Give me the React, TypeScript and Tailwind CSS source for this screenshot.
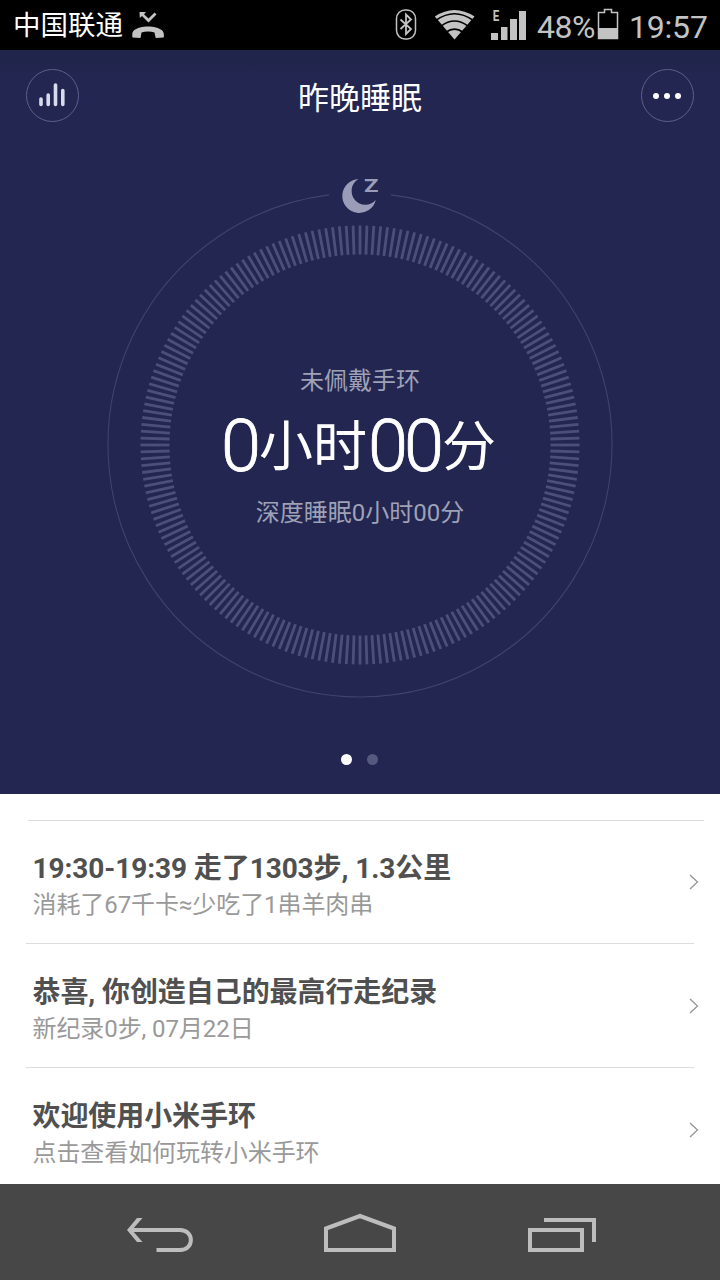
type Activity = {
    title: string
    detail: string
}

const activities: Activity[] = [
    { title: "19:30-19:39 走了1303步, 1.3公里", detail: "消耗了67千卡≈少吃了1串羊肉串" },
    { title: "恭喜, 你创造自己的最高行走纪录", detail: "新纪录0步, 07月22日" },
    { title: "欢迎使用小米手环", detail: "点击查看如何玩转小米手环" },
]

const TICKS = 200

function StatusBar() {
    return <header className="flex h-[50px] shrink-0 items-center bg-black pl-[13px] pr-3 text-[#c3c3c3]">
        <span className="pt-0.5 text-[27.5px] leading-[50px] text-white">中国联通</span>
        <svg className="ml-[9px]" width="32" height="50" viewBox="132 0 32 50" fill="currentColor">
            <path d="M139.500 12h6.500l-2 2.200 4.500 4.300 6-6 2 2-8 8-6.500-6.500-2.200 2z" />
            <path d="M132.500 37.500c-.5-3-.3-5.500 1.500-7.200 6-5.200 22-5.200 28 0 1.800 1.700 2.300 4.200 1.700 7.200l-8 .5-1.200-5.500c-4-1.500-9-1.500-13 0l-1 5.500z" />
        </svg>
        <svg className="ml-auto" width="22" height="50" viewBox="395 0 22 50" fill="none" stroke="currentColor">
            <rect x="396.500" y="10" width="19" height="29" rx="8.500" strokeWidth="1.500" />
            <path d="M400.500 19.500l10.500 9.500-5 5V14.500l5 5-10.500 9.500" strokeWidth="1.800" />
        </svg>
        <svg className="ml-[17px]" width="42" height="50" viewBox="434 0 42 50">
            <path d="M454.500 39.500L434.800 16.500Q454.500 3.500 474.500 16.500Z" fill="currentColor" />
            <path d="M436 20.300Q454.500 7.200 473 20.300M441 26.200Q454.500 15.800 468 26.200M446 32.300Q454.500 25.800 463 32.300" fill="none" stroke="#000" strokeWidth="1.700" />
        </svg>
        <svg className="ml-[14px]" width="38" height="50" viewBox="490 0 38 50" fill="currentColor">
            <text x="492.700" y="20.800" fontSize="15" fontWeight="700" textLength="6.500" lengthAdjust="spacingAndGlyphs">E</text>
            <path d="M491 33h7v7h-7zM501 27h6.500v13H501zM510 19h7v21h-7zM519 11h7v29h-7z" />
        </svg>
        <span className="ml-[9px] w-[59px] whitespace-nowrap pt-[3px] text-[32px] leading-[50px] tracking-[-0.5px]">48%</span>
        <svg className="ml-px" width="22" height="50" viewBox="597 0 22 50" fill="none" stroke="currentColor">
            <path d="M598.500 38.500V12.500h6v-3h7v3h6v26z" strokeWidth="1.500" />
            <path d="M598 28h20v11h-20z" fill="currentColor" stroke="none" />
        </svg>
        <span className="ml-2.5 w-[79px] whitespace-nowrap pt-[3px] text-[32px] leading-[50px] tracking-[-0.2px]">19:57</span>
    </header>
}

function TopBar() {
    return <div className="flex h-[72px] items-start justify-between px-[26px] pt-[19px]">
        <button className="flex size-[53px] items-center justify-center rounded-full border border-[#5d6189] pb-0.5 pr-0.5">
            <svg width="28" height="26" viewBox="0 0 28 26" stroke="#d9dbec" strokeWidth="3.600" strokeLinecap="round">
                <path d="M3 17v5.500M10.200 13v9.500M17.500 3v19.500M24.800 8.500v14" />
            </svg>
        </button>
        <h1 className="pt-[3px] text-[31px] leading-[53px] text-white">昨晚睡眠</h1>
        <button className="flex size-[53px] items-center justify-center gap-[5px] rounded-full border border-[#5d6189] pr-px">
            <i className="size-[6px] rounded-full bg-white" />
            <i className="size-[6px] rounded-full bg-white" />
            <i className="size-[6px] rounded-full bg-white" />
        </button>
    </div>
}

function SleepDial() {
    return <div className="mx-auto mt-[48px] grid h-[530px] w-[508px] shrink-0 place-items-center">
        <svg className="col-start-1 row-start-1" width="508" height="530" viewBox="106 170 508 530" fill="none">
            <path d="M391 194.900A252 252 0 1 1 329 194.900" stroke="#40446b" strokeWidth="1.100" />
            <g stroke="#4c5079" strokeWidth="2.800">
                {Array.from({ length: TICKS }, (_, i) => (
                    <path key={i} d="M360 225.500V254.500" transform={`rotate(${(i * 360) / TICKS} 360 445)`} />
                ))}
            </g>
            <path d="M358.500 179A17 17 0 1 0 375.800 200A13.800 13.800 0 1 1 358.500 179Z" fill="#9b9db8" />
            <text x="364" y="191.600" fontSize="17.500" fontWeight="700" fill="#9b9db8" textLength="14.500" lengthAdjust="spacingAndGlyphs">Z</text>
        </svg>
        <div className="col-start-1 row-start-1 flex flex-col items-center pt-6 text-[#9fa1b7]">
            <p className="text-[24px] leading-9">未佩戴手环</p>
            <p className="mr-[3px] mt-1.5 flex items-center whitespace-nowrap text-[54px] leading-[80px] text-white">
                <span className="text-[72px] font-light tracking-[-2px] [-webkit-text-stroke:0.8px_white]">0</span>
                <span className="pr-px pt-[3px]">小时</span>
                <span className="text-[72px] font-light tracking-[-4px] [-webkit-text-stroke:0.8px_white]">00</span>
                <span className="pl-0.5 pt-[3px]">分</span>
            </p>
            <p className="mt-[7px] text-[24px] leading-9">深度睡眠0小时00分</p>
        </div>
    </div>
}

function ActivityRow({ title, detail }: Activity) {
    return <li className="ml-[26px] mr-[26px] flex h-[124px] shrink-0 items-center border-b border-[#dcdcdc] pl-[6.5px]">
        <div className="flex-1 whitespace-nowrap pt-[11px] tracking-[-0.08px]">
            <h2 className="text-[28px] font-bold leading-9 text-[#505050]">{title}</h2>
            <p className="text-[24px] leading-9 text-[#999]">{detail}</p>
        </div>
        <svg className="-mr-[5px]" width="10" height="18" viewBox="0 0 10 18" fill="none" stroke="#999" strokeWidth="1.400">
            <path d="M1 2l7.500 7L1 16" />
        </svg>
    </li>
}

function NavBar() {
    return <nav className="flex h-24 shrink-0 items-center bg-[#474747]">
        <svg width="720" height="96" viewBox="0 1184 720 96" fill="none" stroke="#bdbdbd" strokeWidth="4">
            <path d="M156.500 1250H180c14.500 0 14.500-20 0-20H131" />
            <path d="M137 1218h5.500l-10.500 12 10.500 12H137l-10-12z" fill="#bdbdbd" stroke="none" />
            <path d="M326 1250v-21.500l34-12.500 34 12.500V1250z" />
            <path d="M530 1230h52v20h-52zM544 1220h50v22" />
        </svg>
    </nav>
}

export default function App() {
    return <div className="flex h-[1280px] w-[720px] flex-col overflow-hidden bg-white font-[Roboto,'Noto_Sans_CJK_SC',sans-serif]">
        <StatusBar />
        <section className="flex h-[744px] shrink-0 flex-col bg-[linear-gradient(#20254a,#222650_24px)]">
            <TopBar />
            <SleepDial />
            <div className="mt-[54px] flex justify-center gap-[15px] pr-px">
                <i className="size-[11px] rounded-full bg-white" />
                <i className="size-[11px] rounded-full bg-[#55587f]" />
            </div>
        </section>
        <main className="flex min-h-0 flex-1 flex-col overflow-hidden">
            <div className="ml-7 mr-4 mt-[26px] shrink-0 border-t border-[#dcdcdc]" />
            <ul className="-mt-px flex flex-col">
                {activities.map(item => <ActivityRow key={item.title} {...item} />)}
            </ul>
        </main>
        <NavBar />
    </div>
}
